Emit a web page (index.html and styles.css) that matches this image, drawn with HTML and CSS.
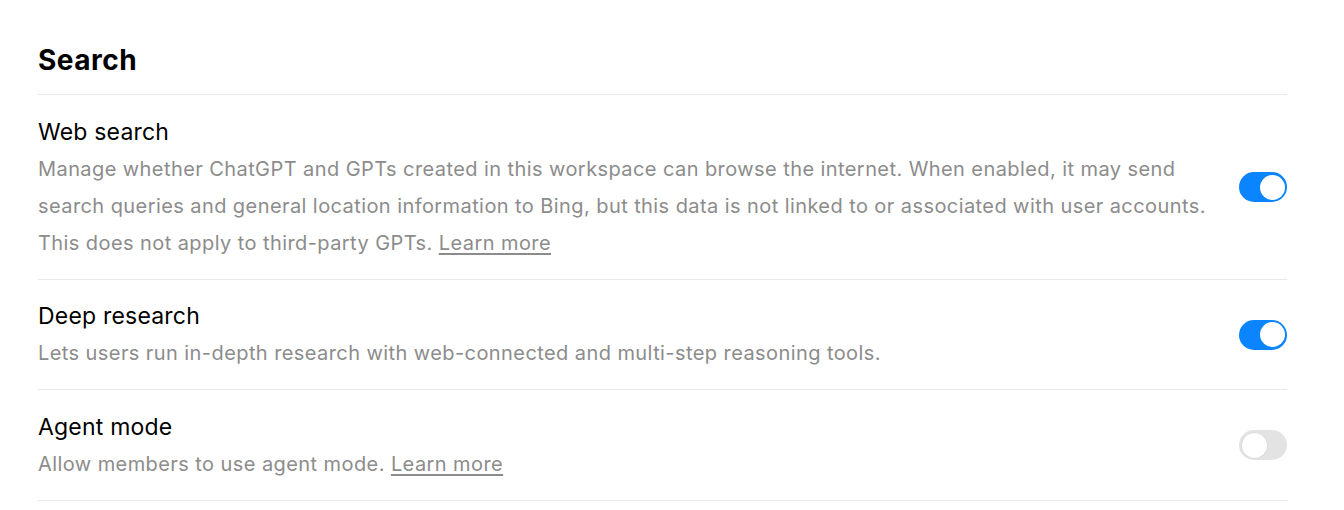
FILE: index.html
```html
<!DOCTYPE html>
<html>
<head>
<meta charset="utf-8">
<link rel="stylesheet" href="styles.css">
</head>
<body>
<section class="settings">
  <h2 class="section-title">Search</h2>
  <div class="row">
    <div class="text">
      <div class="label">Web search</div>
      <div class="desc">Manage whether ChatGPT and GPTs created in this workspace can browse the internet. When enabled, it may send search queries and general location information to Bing, but this data is not linked to or associated with user accounts. This does not apply to third-party GPTs. <a href="#">Learn more</a></div>
    </div>
    <span class="toggle on"><span class="knob"></span></span>
  </div>
  <div class="row">
    <div class="text">
      <div class="label">Deep research</div>
      <div class="desc">Lets users run in-depth research with web-connected and multi-step reasoning tools.</div>
    </div>
    <span class="toggle on"><span class="knob"></span></span>
  </div>
  <div class="row">
    <div class="text">
      <div class="label">Agent mode</div>
      <div class="desc">Allow members to use agent mode. <a href="#">Learn more</a></div>
    </div>
    <span class="toggle off"><span class="knob"></span></span>
  </div>
</section>
</body>
</html>
```
FILE: styles.css
```css
html, body {
  margin: 0;
  padding: 0;
  background: #ffffff;
}
body {
  font-family: Inter, "Liberation Sans", sans-serif;
  color: #000000;
}
.settings {
  width: 1249px;
  margin-left: 38px;
  padding-top: 42px;
}
.section-title {
  margin: 0;
  font-size: 28px;
  line-height: 36px;
  font-weight: 700;
  letter-spacing: 0.5px;
  padding-bottom: 16px;
  border-bottom: 1px solid #e8e8e8;
}
.row {
  display: flex;
  align-items: center;
  gap: 30px;
  padding: 22.5px 0 17px;
  border-bottom: 1px solid #e8e8e8;
}
.text {
  flex: 1;
  min-width: 0;
}
.label {
  font-size: 23px;
  line-height: 28px;
  letter-spacing: 0.2px;
  margin-bottom: 5px;
}
.desc {
  font-size: 20px;
  line-height: 37px;
  letter-spacing: 0.42px;
  color: #8c8c8c;
}
.desc a {
  color: #8c8c8c;
  text-decoration: underline;
  text-underline-offset: 3px;
}
.toggle {
  flex: none;
  width: 48px;
  height: 30px;
  margin-bottom: 5px;
  border-radius: 15px;
  display: flex;
  align-items: center;
  padding: 0 2.5px;
  box-sizing: border-box;
}
.toggle .knob {
  width: 25px;
  height: 25px;
  border-radius: 50%;
  background: #fff;
}
.toggle.on {
  background: #0a84ff;
  justify-content: flex-end;
}
.toggle.off {
  background: #e3e3e3;
  justify-content: flex-start;
}
.toggle.off .knob {
  box-shadow: 0 0 0 0.5px rgba(0,0,0,0.06);
}
```
